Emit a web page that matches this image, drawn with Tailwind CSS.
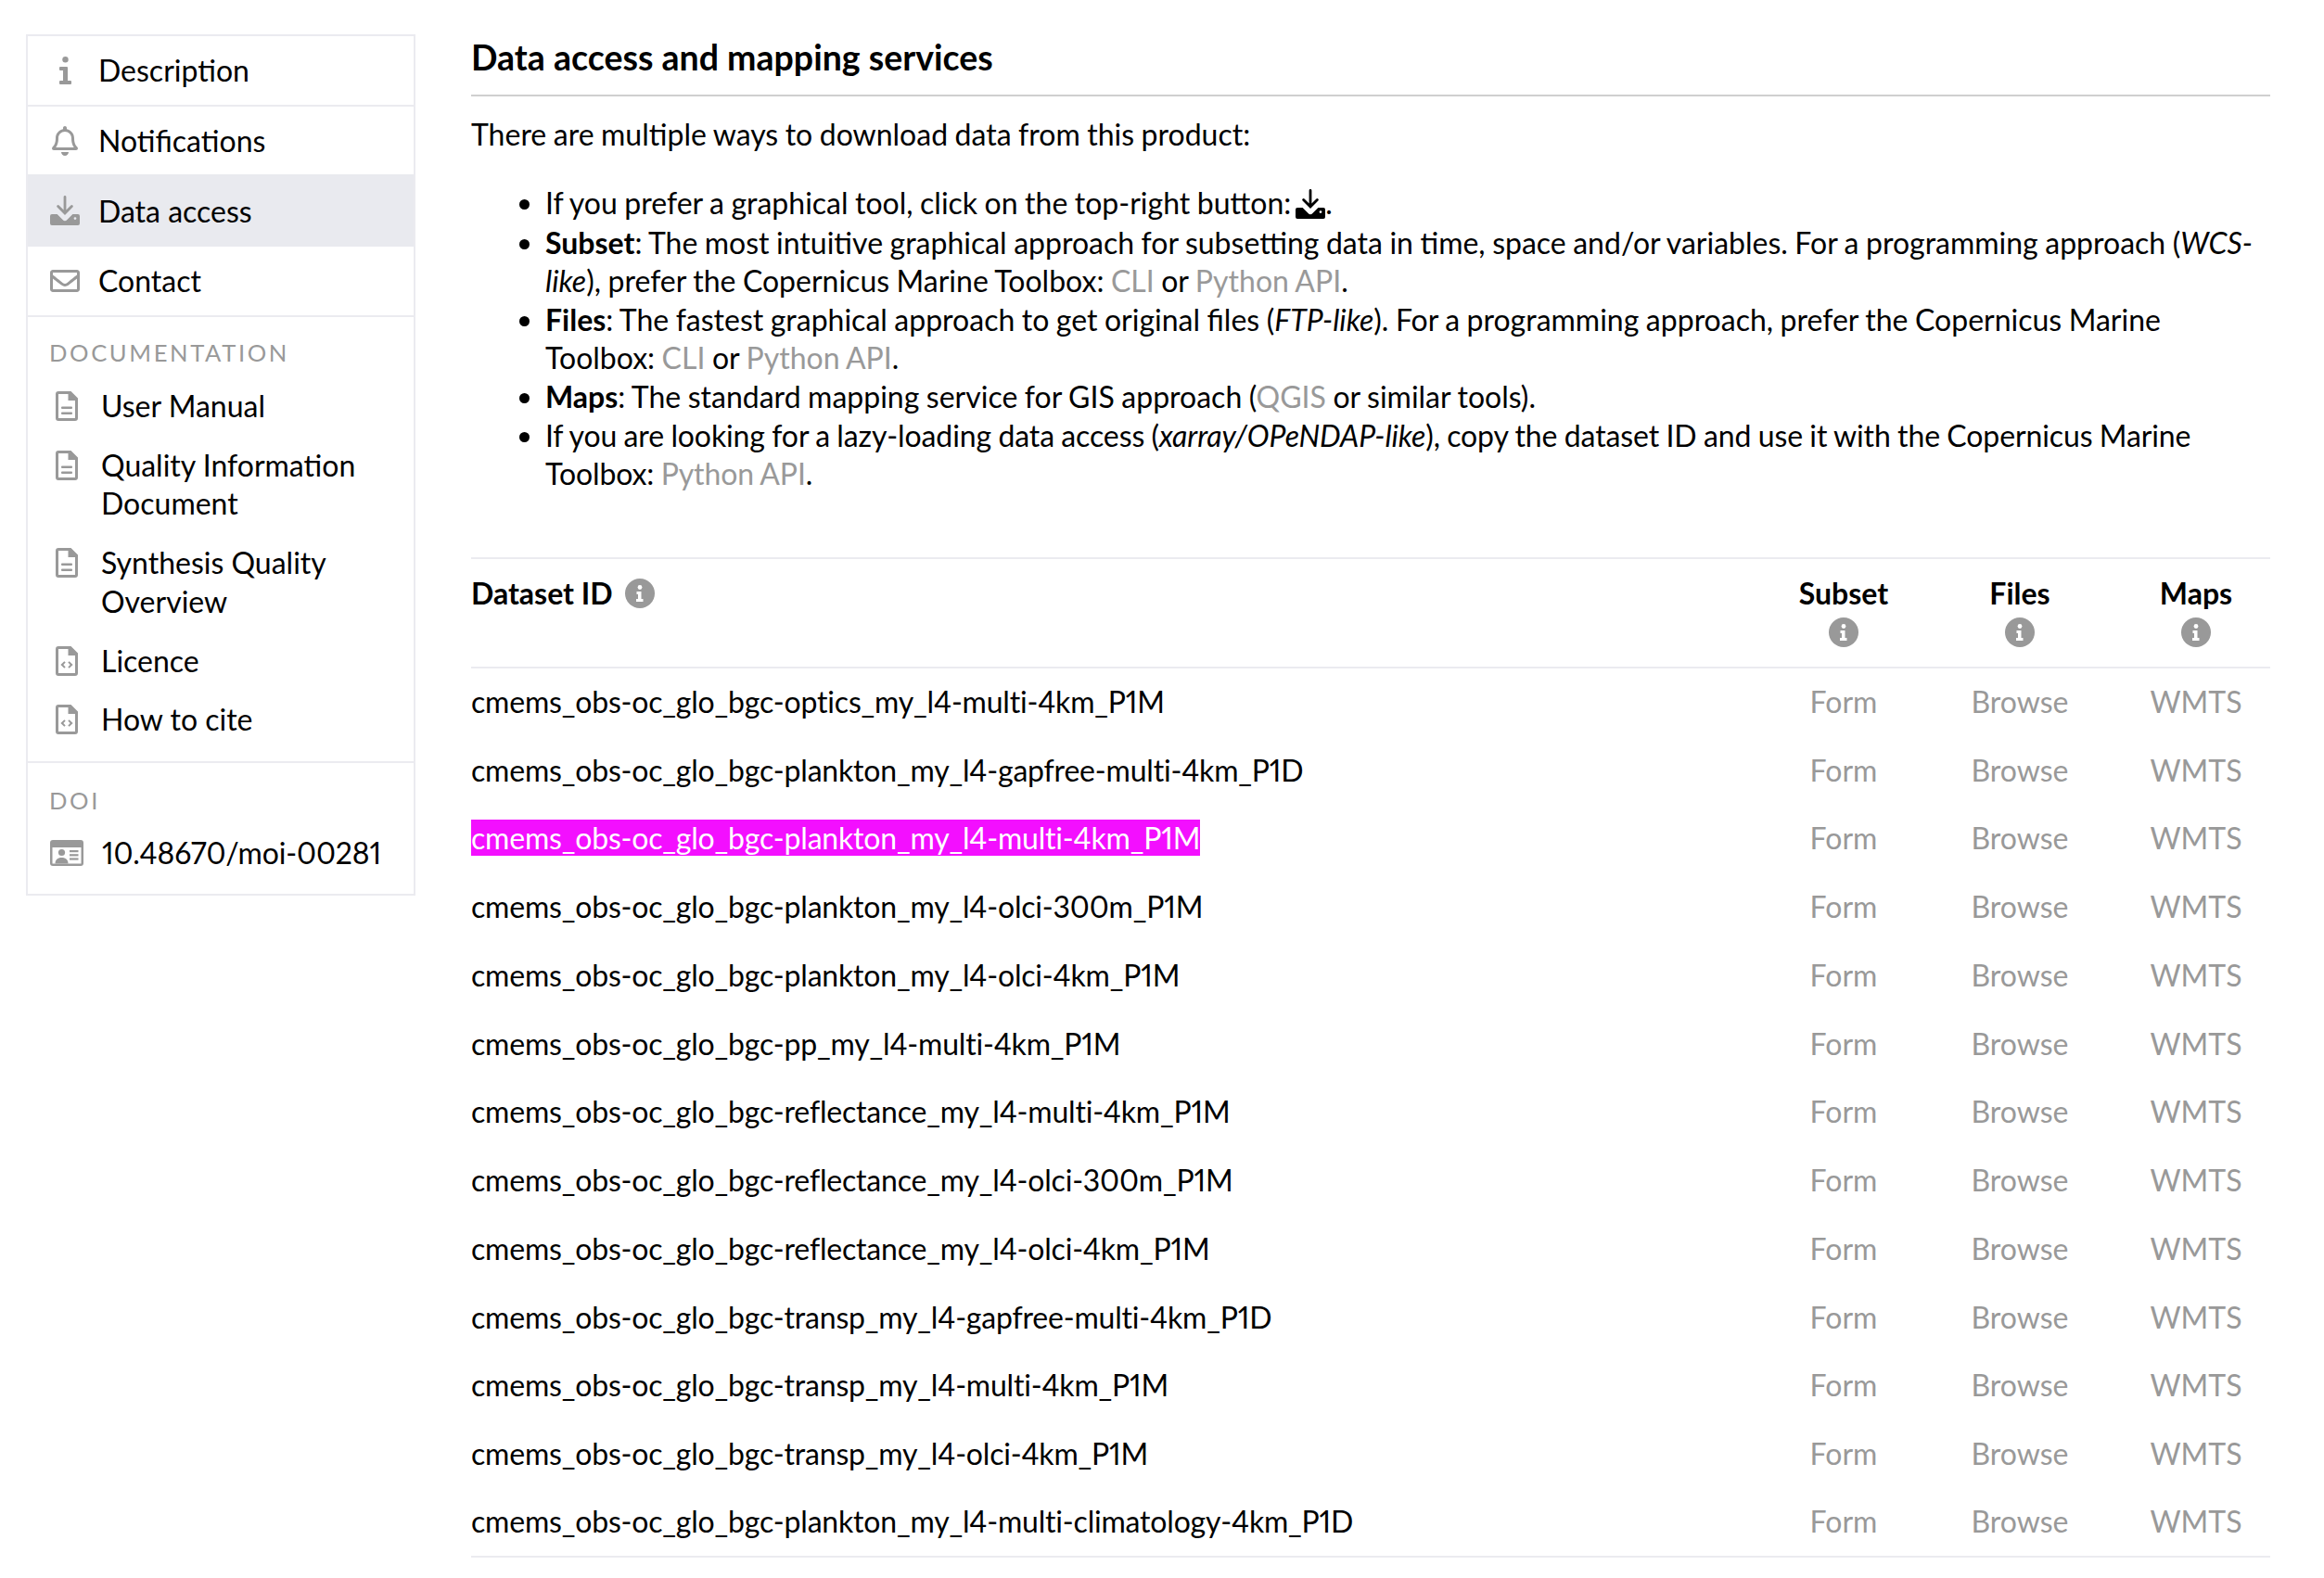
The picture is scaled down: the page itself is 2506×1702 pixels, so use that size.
<!DOCTYPE html>
<html lang="en">
<head>
  <meta charset="UTF-8">
  <title>Data access and mapping services</title>
  <script src="https://cdn.jsdelivr.net/npm/@tailwindcss/browser@4"></script>
</head>
<body class="bg-white text-black font-['Lato',sans-serif] text-[32px] leading-[41.6px] proportional-nums">
  <div class="flex items-start pl-[28px] pt-[37px] w-[2506px] h-[1702px] overflow-hidden">

    <!-- sidebar -->
    <aside class="w-[420px] shrink-0 border-2 border-[#ebebf0]">
      <a class="flex items-center h-[76px] border-b-2 border-[#ebebf0]">
        <span class="w-[76px] flex justify-center pl-[4px] shrink-0">
          <svg class="w-[13px] h-[30px] fill-[#999]" viewBox="0 0 13 30"><circle cx="6.5" cy="3.2" r="3.2"/><path d="M1 11h7a1 1 0 0 1 1 1v14h3a1 1 0 0 1 1 1v2a1 1 0 0 1-1 1H1a1 1 0 0 1-1-1v-2a1 1 0 0 1 1-1h3V15H1a1 1 0 0 1-1-1v-2a1 1 0 0 1 1-1z"/></svg>
        </span>
        <span>Description</span>
      </a>
      <a class="flex items-center h-[73px]">
        <span class="w-[76px] flex justify-center pl-[4px] shrink-0">
          <svg class="w-[28px] h-[32px] fill-[#999]" viewBox="0 0 448 512"><path d="M439.39 362.29c-19.32-20.76-55.47-51.99-55.47-154.29 0-77.7-54.48-139.9-127.94-155.16V32c0-17.67-14.32-32-31.98-32s-31.98 14.33-31.98 32v20.84C118.56 68.1 64.08 130.3 64.08 208c0 102.3-36.15 133.53-55.47 154.29-6 6.45-8.66 14.16-8.61 21.71.11 16.4 12.98 32 32.1 32h383.8c19.12 0 32-15.6 32.1-32 .05-7.55-2.61-15.27-8.61-21.71zM67.53 368c21.22-27.97 44.42-74.33 44.53-159.42 0-.2-.06-.38-.06-.58 0-61.86 50.14-112 112-112s112 50.14 112 112c0 .2-.06.38-.06.58.11 85.1 23.31 131.46 44.53 159.42H67.53zM224 512c35.32 0 63.97-28.65 63.97-63.97H160.03C160.03 483.35 188.68 512 224 512z"/></svg>
        </span>
        <span>Notifications</span>
      </a>
      <a class="flex items-center h-[78px] bg-[#e9eaef]">
        <span class="w-[76px] flex justify-center pl-[4px] shrink-0">
          <svg class="w-[32px] h-[32px] fill-[#999]" viewBox="0 0 32 32"><path d="M14.6 1.4a1.4 1.4 0 0 1 2.8 0v14.2l5-5a1.4 1.4 0 0 1 2 2L16 21l-8.4-8.4a1.4 1.4 0 0 1 2-2l5 5z"/><path d="M2 20h5.6l6 6a3.4 3.4 0 0 0 4.8 0l6-6H30a2 2 0 0 1 2 2v8a2 2 0 0 1-2 2H2a2 2 0 0 1-2-2v-8a2 2 0 0 1 2-2zm25 6a1.4 1.4 0 1 0 0-2.8 1.4 1.4 0 0 0 0 2.8z" fill-rule="evenodd"/></svg>
        </span>
        <span class="pt-[2px]">Data access</span>
      </a>
      <a class="flex items-center h-[76px] border-b-2 border-[#ebebf0]">
        <span class="w-[76px] flex justify-center pl-[4px] shrink-0">
          <svg class="w-[32px] h-[24px] fill-[#999]" viewBox="0 0 512 384"><path d="M464 0H48C21.49 0 0 21.49 0 48v288c0 26.51 21.49 48 48 48h416c26.51 0 48-21.49 48-48V48c0-26.51-21.49-48-48-48zm0 48v40.8c-22.42 18.26-58.16 46.65-134.58 106.49-16.84 13.25-50.2 45.08-73.42 44.7-23.21.38-56.59-31.46-73.42-44.7C106.18 135.46 70.43 107.07 48 88.81V48h416zM48 336V150.4c22.91 18.25 55.4 43.86 104.93 82.65 21.86 17.21 60.13 55.2 103.07 54.97 42.72.23 80.51-37.2 103.06-54.96 49.53-38.79 82.03-64.41 104.94-82.66V336H48z"/></svg>
        </span>
        <span>Contact</span>
      </a>

      <div class="pl-[23px] pt-[22px] pb-[24px] border-b-2 border-[#ebebf0]">
        <div class="text-[25.6px] leading-[32px] tracking-[2.6px] text-[#999] uppercase mb-[21px]">Documentation</div>
        <div class="flex flex-col gap-[22.2px]">
          <a class="flex items-start">
            <svg class="w-[24px] h-[32px] mt-[5px] ml-[7px] mr-[25px] shrink-0 fill-[#999]" viewBox="0 0 24 32"><path d="M3 0h13.5L24 7.500V29a3 3 0 0 1-3 3H3a3 3 0 0 1-3-3V3a3 3 0 0 1 3-3zm0 3v26h18V10h-7.500V3z" fill-rule="evenodd"/><rect x="6" y="16.500" width="12" height="2.600" rx="1"/><rect x="6" y="22.500" width="12" height="2.600" rx="1"/></svg>
            <span>User Manual</span>
          </a>
          <a class="flex items-start">
            <svg class="w-[24px] h-[32px] mt-[5px] ml-[7px] mr-[25px] shrink-0 fill-[#999]" viewBox="0 0 24 32"><path d="M3 0h13.5L24 7.500V29a3 3 0 0 1-3 3H3a3 3 0 0 1-3-3V3a3 3 0 0 1 3-3zm0 3v26h18V10h-7.500V3z" fill-rule="evenodd"/><rect x="6" y="16.500" width="12" height="2.600" rx="1"/><rect x="6" y="22.500" width="12" height="2.600" rx="1"/></svg>
            <span>Quality Information<br>Document</span>
          </a>
          <a class="flex items-start">
            <svg class="w-[24px] h-[32px] mt-[5px] ml-[7px] mr-[25px] shrink-0 fill-[#999]" viewBox="0 0 24 32"><path d="M3 0h13.5L24 7.500V29a3 3 0 0 1-3 3H3a3 3 0 0 1-3-3V3a3 3 0 0 1 3-3zm0 3v26h18V10h-7.500V3z" fill-rule="evenodd"/><rect x="6" y="16.500" width="12" height="2.600" rx="1"/><rect x="6" y="22.500" width="12" height="2.600" rx="1"/></svg>
            <span>Synthesis Quality<br>Overview</span>
          </a>
          <a class="flex items-start">
            <svg class="w-[24px] h-[32px] mt-[5px] ml-[7px] mr-[25px] shrink-0 fill-[#999]" viewBox="0 0 24 32"><path d="M3 0h13.5L24 7.500V29a3 3 0 0 1-3 3H3a3 3 0 0 1-3-3V3a3 3 0 0 1 3-3zm0 3v26h18V10h-7.500V3z" fill-rule="evenodd"/><path d="M9.300 16.200 5.400 20l3.900 3.800 1.400-1.400L8.300 20l2.400-2.400zM14.700 16.200 18.600 20l-3.900 3.800-1.400-1.400 2.400-2.400-2.400-2.400z"/></svg>
            <span>Licence</span>
          </a>
          <a class="flex items-start">
            <svg class="w-[24px] h-[32px] mt-[5px] ml-[7px] mr-[25px] shrink-0 fill-[#999]" viewBox="0 0 24 32"><path d="M3 0h13.5L24 7.500V29a3 3 0 0 1-3 3H3a3 3 0 0 1-3-3V3a3 3 0 0 1 3-3zm0 3v26h18V10h-7.500V3z" fill-rule="evenodd"/><path d="M9.300 16.200 5.400 20l3.900 3.800 1.400-1.400L8.300 20l2.400-2.400zM14.700 16.200 18.600 20l-3.900 3.800-1.400-1.400 2.400-2.400-2.400-2.400z"/></svg>
            <span>How to cite</span>
          </a>
        </div>
      </div>

      <div class="pl-[23px] pt-[24px] pb-[23px]">
        <div class="text-[25.6px] leading-[32px] tracking-[2.6px] text-[#999] uppercase mb-[20px]">DOI</div>
        <a class="flex items-center">
          <svg class="w-[36px] h-[28px] ml-[1px] mr-[20px] shrink-0" viewBox="0 0 36 28"><rect width="36" height="28" rx="3" fill="#999"/><rect x="2.500" y="8" width="31" height="17.500" fill="#fff"/><circle cx="12.500" cy="13.500" r="3.600" fill="#999"/><path d="M5.500 25.500c0-4 2.500-6.500 7-6.500s7 2.500 7 6.500z" fill="#999"/><rect x="21" y="11" width="9.500" height="2.200" fill="#999"/><rect x="21" y="15.200" width="9.500" height="2.200" fill="#999"/><rect x="21" y="19.400" width="9.500" height="2.200" fill="#999"/></svg>
          <span class="tracking-[-0.15px]">10.48670/moi-00281</span>
        </a>
      </div>
    </aside>

    <!-- main -->
    <main class="w-[1940px] ml-[60px] shrink-0">
      <h2 class="text-[37.5px] leading-[50px] font-bold pb-[15px] border-b-2 border-[#cfcfcf]">Data access and mapping services</h2>
      <p class="mt-[20px] [word-spacing:-0.7px]">There are multiple ways to download data from this product:</p>
      <ul class="list-disc pl-[80px] mt-[32px] [word-spacing:-0.7px]">
        <li class="h-[43px]">If you prefer a graphical tool, click on the top-right button:<svg class="inline-block w-[32px] h-[32px] ml-[5px] align-[-5px] fill-black" viewBox="0 0 32 32"><path d="M14.6 1.4a1.4 1.4 0 0 1 2.8 0v14.2l5-5a1.4 1.4 0 0 1 2 2L16 21l-8.4-8.4a1.4 1.4 0 0 1 2-2l5 5z"/><path d="M2 20h5.600l6 6a3.400 3.400 0 0 0 4.800 0l6-6H30a2 2 0 0 1 2 2v8a2 2 0 0 1-2 2H2a2 2 0 0 1-2-2v-8a2 2 0 0 1 2-2zm25 6a1.400 1.400 0 1 0 0-2.800 1.400 1.400 0 0 0 0 2.800z" fill-rule="evenodd"/></svg>.</li>
        <li><strong class="font-bold">Subset</strong>: The most intuitive graphical approach for subsetting data in time, space and/or variables. For a programming approach (<em>WCS-like</em>), prefer the Copernicus Marine Toolbox: <a class="text-[#999]">CLI</a> or <a class="text-[#999]">Python API</a>.</li>
        <li><strong class="font-bold">Files</strong>: The fastest graphical approach to get original files (<em>FTP-like</em>). For a programming approach, prefer the Copernicus Marine Toolbox: <a class="text-[#999]">CLI</a> or <a class="text-[#999]">Python API</a>.</li>
        <li><strong class="font-bold">Maps</strong>: The standard mapping service for GIS approach (<a class="text-[#999]">QGIS</a> or similar tools).</li>
        <li class="tracking-[-0.11px]">If you are looking for a lazy-loading data access (<em>xarray/OPeNDAP-like</em>), copy the dataset ID and use it with the Copernicus Marine Toolbox: <a class="text-[#999]">Python API</a>.</li>
      </ul>

      <table class="w-full table-fixed mt-[69px] border-t-2 border-b-2 border-[#ebebf0] border-collapse">
        <colgroup><col><col class="w-[160px]"><col class="w-[220px]"><col class="w-[160px]"></colgroup>
        <thead>
          <tr class="h-[118px] border-b-2 border-[#ebebf0] align-top">
            <th class="text-left font-bold pt-[16px]"><span class="inline-flex items-center gap-[13px]">Dataset ID <svg class="w-[32px] h-[32px]" viewBox="0 0 32 32"><circle cx="16" cy="16" r="16" fill="#999"/><circle cx="16" cy="9.500" r="2.400" fill="#fff"/><path d="M12.500 14h5v8h2v3h-7.500v-3h2v-5h-1.500z" fill="#fff"/></svg></span></th>
            <th class="font-bold pt-[16px]">Subset<svg class="mx-auto mt-[6px] w-[32px] h-[32px]" viewBox="0 0 32 32"><circle cx="16" cy="16" r="16" fill="#999"/><circle cx="16" cy="9.500" r="2.400" fill="#fff"/><path d="M12.500 14h5v8h2v3h-7.500v-3h2v-5h-1.500z" fill="#fff"/></svg></th>
            <th class="font-bold pt-[16px]">Files<svg class="mx-auto mt-[6px] w-[32px] h-[32px]" viewBox="0 0 32 32"><circle cx="16" cy="16" r="16" fill="#999"/><circle cx="16" cy="9.500" r="2.400" fill="#fff"/><path d="M12.500 14h5v8h2v3h-7.500v-3h2v-5h-1.500z" fill="#fff"/></svg></th>
            <th class="font-bold pt-[16px]">Maps<svg class="mx-auto mt-[6px] w-[32px] h-[32px]" viewBox="0 0 32 32"><circle cx="16" cy="16" r="16" fill="#999"/><circle cx="16" cy="9.500" r="2.400" fill="#fff"/><path d="M12.500 14h5v8h2v3h-7.500v-3h2v-5h-1.500z" fill="#fff"/></svg></th>
          </tr>
        </thead>
        <tbody>
          <tr class="h-[73.75px]"><td class="tracking-[-0.19px]">cmems_obs-oc_glo_bgc-optics_my_l4-multi-4km_P1M</td><td class="text-center text-[#999]">Form</td><td class="text-center text-[#999]">Browse</td><td class="text-center text-[#999]">WMTS</td></tr>
          <tr class="h-[73.75px]"><td class="tracking-[-0.19px]">cmems_obs-oc_glo_bgc-plankton_my_l4-gapfree-multi-4km_P1D</td><td class="text-center text-[#999]">Form</td><td class="text-center text-[#999]">Browse</td><td class="text-center text-[#999]">WMTS</td></tr>
          <tr class="h-[73.75px]"><td class="tracking-[-0.19px]"><span class="bg-[#f30fff] text-white">cmems_obs-oc_glo_bgc-plankton_my_l4-multi-4km_P1M</span></td><td class="text-center text-[#999]">Form</td><td class="text-center text-[#999]">Browse</td><td class="text-center text-[#999]">WMTS</td></tr>
          <tr class="h-[73.75px]"><td class="tracking-[-0.19px]">cmems_obs-oc_glo_bgc-plankton_my_l4-olci-300m_P1M</td><td class="text-center text-[#999]">Form</td><td class="text-center text-[#999]">Browse</td><td class="text-center text-[#999]">WMTS</td></tr>
          <tr class="h-[73.75px]"><td class="tracking-[-0.19px]">cmems_obs-oc_glo_bgc-plankton_my_l4-olci-4km_P1M</td><td class="text-center text-[#999]">Form</td><td class="text-center text-[#999]">Browse</td><td class="text-center text-[#999]">WMTS</td></tr>
          <tr class="h-[73.75px]"><td class="tracking-[-0.19px]">cmems_obs-oc_glo_bgc-pp_my_l4-multi-4km_P1M</td><td class="text-center text-[#999]">Form</td><td class="text-center text-[#999]">Browse</td><td class="text-center text-[#999]">WMTS</td></tr>
          <tr class="h-[73.75px]"><td class="tracking-[-0.19px]">cmems_obs-oc_glo_bgc-reflectance_my_l4-multi-4km_P1M</td><td class="text-center text-[#999]">Form</td><td class="text-center text-[#999]">Browse</td><td class="text-center text-[#999]">WMTS</td></tr>
          <tr class="h-[73.75px]"><td class="tracking-[-0.19px]">cmems_obs-oc_glo_bgc-reflectance_my_l4-olci-300m_P1M</td><td class="text-center text-[#999]">Form</td><td class="text-center text-[#999]">Browse</td><td class="text-center text-[#999]">WMTS</td></tr>
          <tr class="h-[73.75px]"><td class="tracking-[-0.19px]">cmems_obs-oc_glo_bgc-reflectance_my_l4-olci-4km_P1M</td><td class="text-center text-[#999]">Form</td><td class="text-center text-[#999]">Browse</td><td class="text-center text-[#999]">WMTS</td></tr>
          <tr class="h-[73.75px]"><td class="tracking-[-0.19px]">cmems_obs-oc_glo_bgc-transp_my_l4-gapfree-multi-4km_P1D</td><td class="text-center text-[#999]">Form</td><td class="text-center text-[#999]">Browse</td><td class="text-center text-[#999]">WMTS</td></tr>
          <tr class="h-[73.75px]"><td class="tracking-[-0.19px]">cmems_obs-oc_glo_bgc-transp_my_l4-multi-4km_P1M</td><td class="text-center text-[#999]">Form</td><td class="text-center text-[#999]">Browse</td><td class="text-center text-[#999]">WMTS</td></tr>
          <tr class="h-[73.75px]"><td class="tracking-[-0.19px]">cmems_obs-oc_glo_bgc-transp_my_l4-olci-4km_P1M</td><td class="text-center text-[#999]">Form</td><td class="text-center text-[#999]">Browse</td><td class="text-center text-[#999]">WMTS</td></tr>
          <tr class="h-[73.75px]"><td class="tracking-[-0.19px]">cmems_obs-oc_glo_bgc-plankton_my_l4-multi-climatology-4km_P1D</td><td class="text-center text-[#999]">Form</td><td class="text-center text-[#999]">Browse</td><td class="text-center text-[#999]">WMTS</td></tr>
        </tbody>
      </table>
    </main>
  </div>
</body>
</html>
